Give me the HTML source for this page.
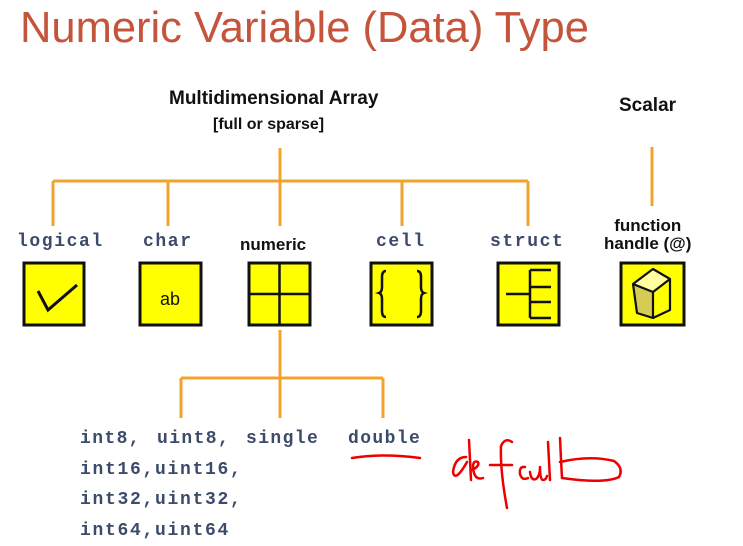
<!DOCTYPE html>
<html><head><style>
body{margin:0;width:743px;height:543px;background:#fff;position:relative;overflow:hidden;font-family:"Liberation Sans",sans-serif}
.a{position:absolute;white-space:nowrap}
.m{font-family:"Liberation Mono",monospace;font-weight:bold;color:#3d4b6b;font-size:18px;letter-spacing:1.6px}
.r{line-height:30.5px;font-size:18px;letter-spacing:1.4px;top:424px}
.b{font-weight:bold;color:#111}
</style></head><body>
<div class="a" style="left:20px;top:4px;font-size:43.5px;color:#c4553c">Numeric Variable (Data) Type</div>
<div class="a b" style="left:169px;top:88px;font-size:19px">Multidimensional Array</div>
<div class="a b" style="left:213px;top:116px;font-size:16px">[full or sparse]</div>
<div class="a b" style="left:619px;top:95px;font-size:19px">Scalar</div>
<div class="a b" style="left:604px;top:217px;font-size:17px;line-height:18px;text-align:center">function<br>handle (@)</div>
<div class="a m" style="left:17px;top:232px">logical</div>
<div class="a m" style="left:143px;top:232px">char</div>
<div class="a b" style="left:240px;top:235px;font-size:17px;font-weight:bold">numeric</div>
<div class="a m" style="left:376px;top:232px">cell</div>
<div class="a m" style="left:490px;top:232px">struct</div>
<svg class="a" style="left:0;top:0" width="743" height="543">
<g stroke="#f0a42c" stroke-width="3" fill="none">
<path d="M280 148V181M53 181H528M53 181V226M168 181V226M280 181V226M402 181V226M528 181V226M652 147V206M280 330V378M181 378H383M181 378V418M280 378V418M383 378V418"/>
</g>
<g fill="#ffff00" stroke="#111" stroke-width="3">
<rect x="24" y="263" width="60" height="62"/><rect x="140" y="263" width="61" height="62"/>
<rect x="249" y="263" width="61" height="62"/><rect x="371" y="263" width="61" height="62"/>
<rect x="498" y="263" width="61" height="62"/><rect x="621" y="263" width="63" height="62"/>
</g>
<g stroke="#111" stroke-width="2.5" fill="none">
<path d="M38 291L48 310L77 285" stroke-width="3"/>
<path d="M249 294H310M279.5 263V325"/>
<path d="M386 271q-4 0-4 6v10q0 5-3 6q3 1 3 6v12q0 6 4 6M417 271q4 0 4 6v10q0 5 3 6q-3 1-3 6v12q0 6-4 6"/>
<path d="M506 294H530M530 270V318M530 270H551M530 287H551M530 302H551M530 318H551"/>
</g>
<path d="M633 284L653 292L653 318L637 313Z" fill="#d6cc55"/>
<path d="M633 284L653 269L670 279L653 292Z" fill="#ffffa0"/>
<g stroke="#111" stroke-width="2.2" fill="none" stroke-linejoin="round"><path d="M633 284L653 269L670 279L670 310L653 318L637 313Z M633 284L653 292L670 279M653 292V318"/></g>
<text x="170" y="305" font-size="18" text-anchor="middle" fill="#111" font-family="Liberation Sans">ab</text>
<g stroke="#e00" stroke-width="2.5" fill="none" stroke-linecap="round" stroke-linejoin="round">
<path d="M352 458q30-5 68 0"/>
<path d="M466 457Q455 457 453 472Q455 483 467 462M469 440Q470 460 471 480"/>
<path d="M472 470Q480 466 478 462Q473 460 473 467Q474 481 483 478"/>
<path d="M512 442Q505 437 501 446Q500 470 507 508M490 465H512"/>
<path d="M525 467Q519 466 520 474Q522 481 528 478"/>
<path d="M530 472Q531 481 536 479Q540 476 540 467Q540 480 543 480Q546 480 547 476"/>
<path d="M548 442Q549 460 550 480"/>
<path d="M560 438Q561 460 562 478M560 462Q590 455 614 461Q624 468 619 477Q605 484 562 478"/>
</g>
</svg>
<div class="a m r" style="left:80px">int8,</div>
<div class="a m r" style="left:157px">uint8,</div>
<div class="a m r" style="left:246px">single</div>
<div class="a m r" style="left:348px">double</div>
<div class="a m" style="left:80px;top:454.5px;line-height:30.5px;font-size:18px;letter-spacing:1.7px">int16,uint16,<br>int32,uint32,<br>int64,uint64</div>
</body></html>
